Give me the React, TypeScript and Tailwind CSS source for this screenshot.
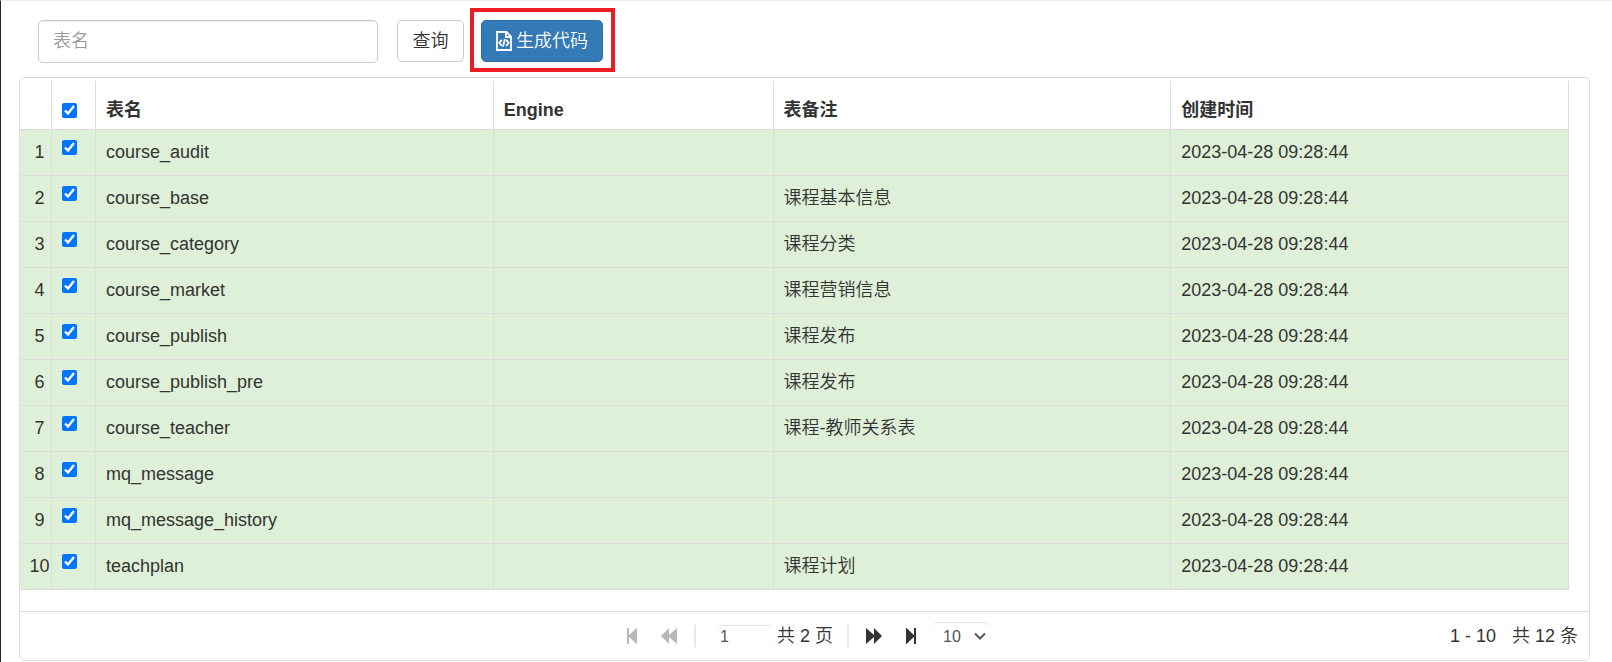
import { useEffect, useRef, useState } from "react";

const created = "2023-04-28 09:28:44";

const rows = [
  { name: "course_audit", remark: "" },
  { name: "course_base", remark: "课程基本信息" },
  { name: "course_category", remark: "课程分类" },
  { name: "course_market", remark: "课程营销信息" },
  { name: "course_publish", remark: "课程发布" },
  { name: "course_publish_pre", remark: "课程发布" },
  { name: "course_teacher", remark: "课程-教师关系表" },
  { name: "mq_message", remark: "" },
  { name: "mq_message_history", remark: "" },
  { name: "teachplan", remark: "课程计划" },
];

const th = "border-r border-b border-[#ddd] px-[10px] pb-[6px] text-left align-bottom font-bold";
const td = "border-r border-b border-[#ddd] px-[10px] py-0";

function FileCodeIcon() {
  return (
    <svg viewBox="0 0 16 20" className="h-5 w-4" fill="none" stroke="currentColor" strokeWidth="1.8" aria-hidden="true">
      <path d="M1 1h9.500L15 5.500V19H1z" />
      <path d="M10 1v5h5" />
      <path d="M5.800 8.800L3.300 11.800l2.500 3M10.200 8.800l2.500 3-2.500 3M8.900 8l-1.800 7.600" />
    </svg>
  );
}

function FirstIcon() {
  return (
    <svg viewBox="0 0 12 18" className="h-[18px] w-3" fill="currentColor" aria-hidden="true">
      <path d="M1 1h2v7.300L10.500 1h.5v16h-.5L3 9.700V17H1z" />
    </svg>
  );
}

function BackIcon() {
  return (
    <svg viewBox="0 0 18 18" className="size-[18px]" fill="currentColor" aria-hidden="true">
      <path d="M1 9l8-8v7l8-7v16l-8-7v7z" />
    </svg>
  );
}

function Divider() {
  return <span className="h-[22px] w-0.5 bg-[#e8e8e8]" />;
}

export default function App() {
  const [selected, setSelected] = useState<boolean[]>(rows.map(() => true));
  const allRef = useRef<HTMLInputElement>(null);
  const count = selected.filter(Boolean).length;
  const all = count === rows.length;

  useEffect(() => {
    if (allRef.current) allRef.current.indeterminate = count > 0 && !all;
  }, [count, all]);

  return (
    <main className="min-h-screen border-t border-l border-t-[#e9edf3] border-l-[#1f2937] bg-white pr-[22px] pl-[18px] font-['Liberation_Sans','Noto_Sans_CJK_SC',sans-serif] text-[18px] leading-[25px] font-[350] text-[#333]">
      <form className="flex h-[76px] items-start pt-[19px] pl-[19px]" onSubmit={(e) => e.preventDefault()}>
        <input
          type="text"
          aria-label="表名"
          placeholder="表名"
          className="h-[43px] w-[340px] rounded-[5px] border border-[#ccc] px-[14px] shadow-[inset_0_1px_1px_rgba(0,0,0,0.075)] placeholder:text-[#999]"
        />
        <button type="submit" className="ml-[19px] h-[42px] w-[67px] rounded-[5px] border border-[#ccc] bg-white">
          查询
        </button>
        <div className="relative ml-[17px]">
          <button
            type="button"
            className="flex h-[42px] w-[122px] items-center justify-center gap-1 rounded-[5px] border border-[#2e6da4] bg-[#337ab7] text-white"
          >
            <FileCodeIcon />
            <span>生成代码</span>
          </button>
          <span className="pointer-events-none absolute -top-3 -right-3 -bottom-[10px] -left-[11px] border-4 border-[#ed1c24]" />
        </div>
      </form>

      <section className="rounded-[5px] border border-[#ddd]">
        <div className="pt-[3px] pr-5 pb-[21px]">
          <table className="w-full table-fixed border-separate border-spacing-0">
            <colgroup>
              <col className="w-8" />
              <col className="w-11" />
              <col className="w-[27%]" />
              <col className="w-[19%]" />
              <col className="w-[27%]" />
              <col className="w-[27%]" />
            </colgroup>
            <thead>
              <tr className="h-[49px]">
                <th className={th} aria-label="#" />
                <th className={th}>
                  <input
                    ref={allRef}
                    type="checkbox"
                    aria-label="全选"
                    checked={all}
                    onChange={() => setSelected(rows.map(() => !all))}
                    className="mb-[5px] block size-[15px]"
                  />
                </th>
                <th className={th}>表名</th>
                <th className={th}>Engine</th>
                <th className={th}>表备注</th>
                <th className={th}>创建时间</th>
              </tr>
            </thead>
            <tbody>
              {rows.map((row, i) => (
                <tr key={row.name} className={selected[i] ? "h-[46px] bg-[#dff0d8]" : "h-[46px]"}>
                  <td className="border-r border-b border-[#ddd] pl-2 text-center">{i + 1}</td>
                  <td className="border-r border-b border-[#ddd] px-[10px] pt-[10px] align-top">
                    <input
                      type="checkbox"
                      aria-label={row.name}
                      checked={selected[i]}
                      onChange={() => setSelected(selected.map((s, j) => (j === i ? !s : s)))}
                      className="block size-[15px]"
                    />
                  </td>
                  <td className={td}>{row.name}</td>
                  <td className={td} />
                  <td className={td}>{row.remark}</td>
                  <td className={td}>{created}</td>
                </tr>
              ))}
            </tbody>
          </table>
        </div>

        <footer className="grid h-[49px] grid-cols-[1fr_auto_1fr] items-center border-t border-[#ddd]">
          <span />
          <nav className="flex items-center pl-2" aria-label="分页">
            <button type="button" disabled aria-label="首页" className="text-[#b8b8b8]">
              <FirstIcon />
            </button>
            <button type="button" disabled aria-label="上一页" className="mr-4 ml-[22px] text-[#b8b8b8]">
              <BackIcon />
            </button>
            <Divider />
            <input
              type="text"
              aria-label="页码"
              defaultValue="1"
              className="ml-5 h-[22px] w-[57px] rounded-[5px] px-1 text-[16px] text-[#555] shadow-[inset_0_1px_1px_rgba(0,0,0,0.1)]"
            />
            <span className="mr-[14px] ml-1">共 2 页</span>
            <Divider />
            <button type="button" aria-label="下一页" className="ml-4 rotate-180 text-[#333]">
              <BackIcon />
            </button>
            <button type="button" aria-label="末页" className="ml-[22px] rotate-180 text-[#333]">
              <FirstIcon />
            </button>
            <span className="relative ml-4 flex items-center">
              <select
                aria-label="每页条数"
                defaultValue="10"
                className="h-7 w-[58px] appearance-none rounded-[5px] bg-white pl-[10px] text-[16px] text-[#555] shadow-[inset_0_1px_1px_rgba(0,0,0,0.1)]"
              >
                <option>10</option>
                <option>20</option>
                <option>50</option>
              </select>
              <svg
                viewBox="0 0 12 8"
                className="pointer-events-none absolute right-[5px] h-2 w-3"
                fill="none"
                stroke="#555"
                strokeWidth="2"
                aria-hidden="true"
              >
                <path d="M1 1.500l5 5 5-5" />
              </svg>
            </span>
          </nav>
          <p className="pr-[11px] text-right">
            <span className="mr-4">1 - 10</span>
            <span>共 12 条</span>
          </p>
        </footer>
      </section>
    </main>
  );
}
